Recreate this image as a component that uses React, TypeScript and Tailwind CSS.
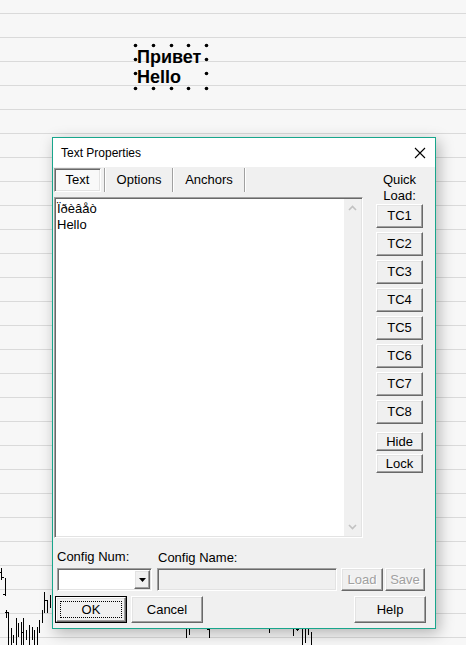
import type { ReactNode } from 'react'

const FONT = { fontFamily: '"Liberation Sans", Arial, sans-serif' }

// classic 3D edges
const RAISED =
  'bg-[#f0f0f0] border border-t-white border-l-white border-r-[#696969] border-b-[#696969] shadow-[inset_-1px_-1px_0_#a0a0a0,inset_1px_1px_0_#e3e3e3]'
const SUNKEN =
  'border border-t-[#a0a0a0] border-l-[#a0a0a0] border-r-white border-b-white shadow-[inset_1px_1px_0_#696969,inset_-1px_-1px_0_#e3e3e3]'

const GRID_LINES = Array.from({ length: 27 }, (_, i) => 13.5 + i * 24)

// [x, y1, y2] price bars of the chart under the dialog
const BARS: [number, number, number][] = [
  [1, 568, 580], [5, 578, 596], [6, 610, 618], [8, 612, 645], [11, 628, 645],
  [13, 635, 643], [16, 618, 645], [18, 623, 637], [21, 622, 645], [23, 618, 645],
  [26, 630, 640], [29, 625, 645], [32, 627, 640], [34, 630, 645], [37, 627, 645],
  [39, 620, 633], [42, 610, 623], [44, 592, 613], [47, 600, 613], [50, 595, 608],
  [186, 628, 638], [189, 628, 635], [209, 628, 638], [269, 628, 633], [293, 628, 636],
  [297, 628, 631], [302, 628, 645], [305, 628, 643], [308, 628, 635], [311, 632, 645],
]

const TICKS: [number, number, number][] = [
  [0, 1, 572], [1, 3, 577], [3, 5, 594], [5, 8, 612], [22, 23, 632], [44, 46, 600],
  [207, 209, 629], [296, 298, 629],
]

const HANDLE_X = [135, 153, 171, 188, 206]
const HANDLE_Y = [45, 59, 73, 88]

function ChartCanvas() {
  return (
    <svg className="absolute inset-0" width={466} height={645} viewBox="0 0 466 645">
      {GRID_LINES.map(y => (
        <line key={y} x1={0} x2={466} y1={y} y2={y} stroke="#dadada" strokeWidth={1} />
      ))}
      {BARS.map(([x, a, b], i) => (
        <line key={i} x1={x + 0.5} x2={x + 0.5} y1={a} y2={b} stroke="#000" strokeWidth={1} />
      ))}
      {TICKS.map(([a, b, y], i) => (
        <line key={i} x1={a} x2={b + 1} y1={y + 0.5} y2={y + 0.5} stroke="#000" strokeWidth={1} />
      ))}
      {HANDLE_X.map(x =>
        HANDLE_Y.filter(y => y === 45 || y === 88 || x === 135 || x === 206).map(y => (
          <circle key={`${x}-${y}`} cx={x + 0.5} cy={y + 0.5} r={1.8} fill="#000" />
        )),
      )}
    </svg>
  )
}

function Button({ children, className = '', disabled }: { children: ReactNode; className?: string; disabled?: boolean }) {
  return (
    <div
      className={`${RAISED} flex items-center justify-center text-[13px] ${
        disabled ? 'text-[#a0a0a0] [text-shadow:1px_1px_0_#fff]' : 'text-black'
      } ${className}`}
    >
      {children}
    </div>
  )
}

function Chevron({ down }: { down?: boolean }) {
  return (
    <svg width={9} height={6} viewBox="0 0 9 6">
      <path
        d={down ? 'M1 1 L4.5 4.5 L8 1' : 'M1 5 L4.5 1.5 L8 5'}
        fill="none"
        stroke="#c2c2c2"
        strokeWidth={1.6}
      />
    </svg>
  )
}

function TabSeparator() {
  return <div className="w-[2px] h-full border-l border-l-[#a0a0a0] border-r border-r-white" />
}

function TextPropertiesDialog() {
  return (
    <div
      className="absolute left-[52px] top-[137px] w-[384px] h-[492px] border border-[#18a68c] bg-[#f0f0f0] flex flex-col shadow-[3px_4px_14px_rgba(0,0,0,0.28)]"
      style={FONT}
    >
      <div className="h-[29px] bg-white flex items-center justify-between pl-[8px] pr-[9px]">
        <span className="text-[12px] text-black">Text Properties</span>
        <svg width={12} height={12} viewBox="0 0 12 12">
          <path d="M1 1 L11 11 M11 1 L1 11" stroke="#000" strokeWidth={1.1} />
        </svg>
      </div>

      <div className="flex pt-[1px]">
        <div className="ml-[1px] w-[309px] flex flex-col">
          <div className="h-[24px] flex items-stretch text-[13px] text-black">
            <div className={`${SUNKEN} bg-[#f9f9f9] w-[47px] flex items-center justify-center`}>Text</div>
            <div className="w-[3px]" />
            <TabSeparator />
            <div className="w-[66px] flex items-center justify-center">Options</div>
            <TabSeparator />
            <div className="w-[70px] flex items-center justify-center">Anchors</div>
            <TabSeparator />
          </div>

          <div className={`${SUNKEN} mt-[5px] h-[341px] bg-white flex`}>
            <div className="flex-1 pl-[2px] pt-[3px] text-[13px] leading-[16px] text-black">
              <div>Ïðèâåò</div>
              <div>Hello</div>
            </div>
            <div className="w-[17px] my-[1px] mr-[1px] bg-[#f0f0f0] flex flex-col items-center justify-between py-[6px]">
              <Chevron />
              <Chevron down />
            </div>
          </div>
        </div>

        <div className="ml-[13px] w-[47px] flex flex-col text-[13px] text-black">
          <div className="mt-[4px] leading-[16px] text-center">
            Quick
            <br />
            Load:
          </div>
          <div className="flex flex-col gap-[4px]">
            {[1, 2, 3, 4, 5, 6, 7, 8].map(n => (
              <Button key={n} className="h-[24px]">TC{n}</Button>
            ))}
          </div>
          <Button className="h-[19px] mt-[8px]">Hide</Button>
          <Button className="h-[19px] mt-[3px]">Lock</Button>
        </div>
      </div>

      <div className="flex text-[13px] text-black mt-[11px] h-[16px] leading-[16px]">
        <span className="ml-[4px] w-[101px]">Config Num:</span>
        <span className="mt-[1px]">Config Name:</span>
      </div>

      <div className="flex mt-[3px] h-[23px]">
        <div className={`${SUNKEN} ml-[4px] w-[95px] bg-white flex justify-end p-[1px]`}>
          <div className={`${RAISED} w-[16px] flex items-center justify-center`}>
            <svg width={7} height={4} viewBox="0 0 7 4">
              <path d="M0 0 H7 L3.5 4 Z" fill="#000" />
            </svg>
          </div>
        </div>
        <div className={`${SUNKEN} ml-[5px] w-[180px] bg-[#f0f0f0]`} />
        <Button disabled className="ml-[4px] w-[42px]">Load</Button>
        <Button disabled className="ml-[2px] w-[40px]">Save</Button>
      </div>

      <div className="flex mt-[5px] h-[27px]">
        <div className="ml-[2px] w-[72px] border border-black flex">
          <Button className="flex-1 p-[3px]">
            <div className="w-full h-full border border-dotted border-black flex items-center justify-center">OK</div>
          </Button>
        </div>
        <Button className="ml-[4px] w-[72px]">Cancel</Button>
        <div className="flex-1" />
        <Button className="mr-[9px] w-[72px]">Help</Button>
      </div>
    </div>
  )
}

export default function App() {
  return (
    <div className="relative w-[466px] h-[645px] bg-[#f7f7f7] overflow-hidden">
      <ChartCanvas />
      <div
        className="absolute left-[137px] top-[47px] text-[18px] leading-[20px] font-bold text-black"
        style={FONT}
      >
        <div>Привет</div>
        <div>Hello</div>
      </div>
      <TextPropertiesDialog />
    </div>
  )
}
